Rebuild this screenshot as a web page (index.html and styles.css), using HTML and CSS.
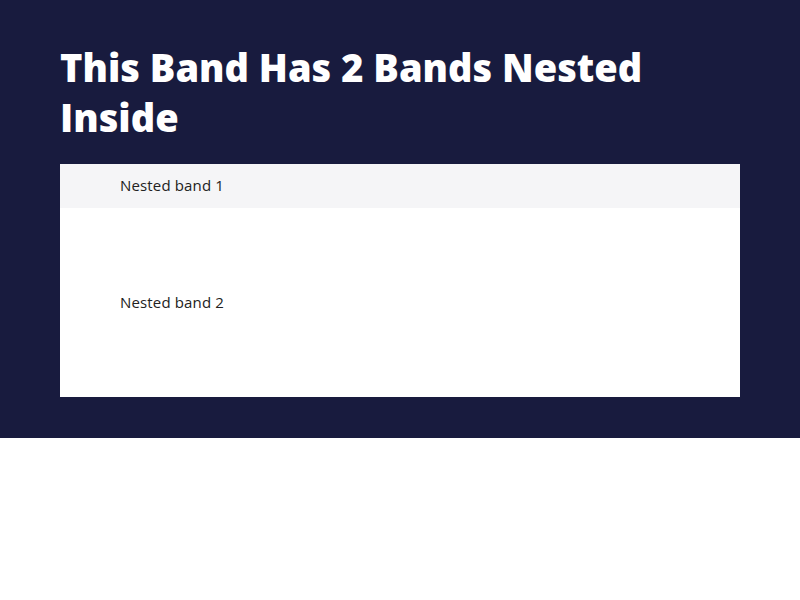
FILE: index.html
```html
<!DOCTYPE html>
<html>
<head>
<meta charset="utf-8">
<link rel="stylesheet" href="styles.css">
</head>
<body>
<section class="band">
  <h1 class="band-title">This Band Has 2 Bands Nested Inside</h1>
  <div class="nested">
    <div class="nested-band nested-band--grey">Nested band 1</div>
    <div class="nested-band nested-band--tall">Nested band 2</div>
  </div>
</section>
</body>
</html>
```

FILE: styles.css
```css
html, body {
  margin: 0;
  padding: 0;
  background: #ffffff;
  font-family: "Open Sans", "Liberation Sans", sans-serif;
}
.band {
  background: #181b3e;
  padding: 42px 60px 41px;
}
.band-title {
  margin: 0 0 22px;
  color: #ffffff;
  font-size: 38px;
  font-weight: 800;
  line-height: 50px;
  max-width: 600px;
}
.nested {
  background: #ffffff;
  display: flex;
  flex-direction: column;
}
.nested-band {
  display: flex;
  align-items: center;
  padding: 0 60px 2px;
  box-sizing: border-box;
  font-size: 15px;
  letter-spacing: 0.15px;
  color: #222222;
}
.nested-band--grey {
  background: #f5f5f7;
  height: 44px;
}
.nested-band--tall {
  height: 189px;
}
```
